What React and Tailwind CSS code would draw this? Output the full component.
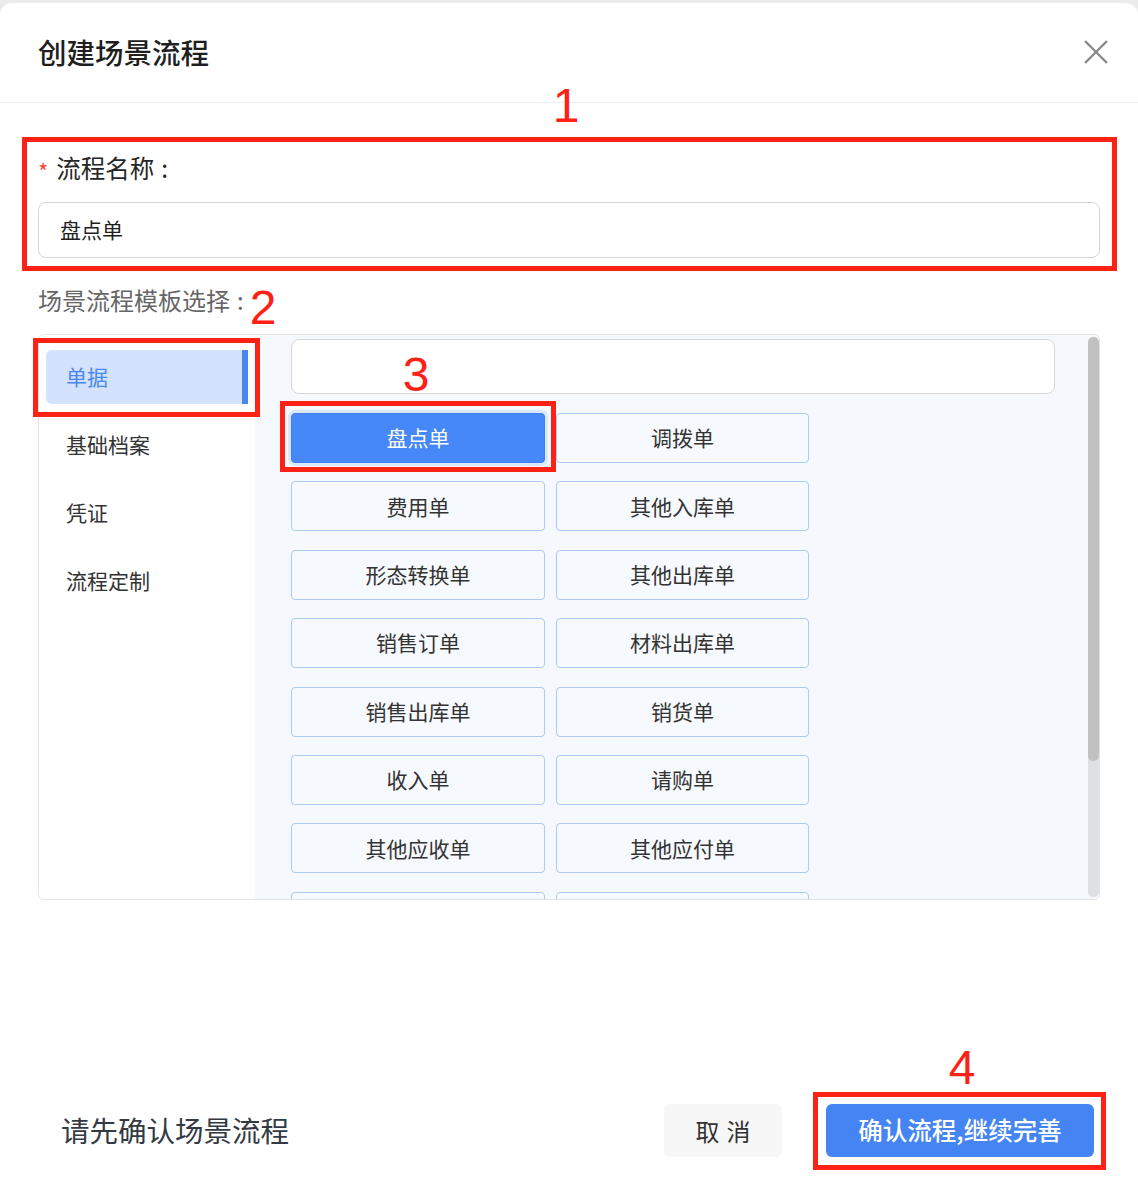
import React from "react";

const font = { fontFamily: '"Noto Sans CJK SC", "Noto Sans", sans-serif' };

const items = [
  ["盘点单", "调拨单"],
  ["费用单", "其他入库单"],
  ["形态转换单", "其他出库单"],
  ["销售订单", "材料出库单"],
  ["销售出库单", "销货单"],
  ["收入单", "请购单"],
  ["其他应收单", "其他应付单"],
  ["", ""],
];

function RedBox({ className }) {
  return <div className={"pointer-events-none absolute border-[5px] border-[#fe2115] " + className} />;
}

function Num({ children, className }) {
  return (
    <div
      className={"pointer-events-none absolute w-[40px] text-center text-[48px] leading-none text-[#fe2115] " + className}
      style={{ fontFamily: '"Liberation Sans", Arial, sans-serif' }}
    >
      {children}
    </div>
  );
}

export default function App() {
  return (
    <div className="relative h-[1180px] w-[1138px] overflow-hidden bg-[#ececec] pt-[3px]" style={font}>
      <div className="flex h-full flex-col rounded-t-[12px] bg-white">
        {/* header */}
        <div className="flex h-[100px] shrink-0 items-center justify-between border-b border-[#eeeeee] pl-[38px] pr-[29px]">
          <div className="text-[28.5px] font-medium text-[#1f1f1f]">创建场景流程</div>
          <svg width="26" height="26" viewBox="0 0 26 26" className="mt-[-2px]">
            <path d="M2 2 L24 24 M24 2 L2 24" stroke="#8a8a8a" strokeWidth="2.4" fill="none" />
          </svg>
        </div>

        {/* body */}
        <div className="px-[38px] pt-[50px]">
          <div className="flex h-[30px] items-center text-[24.5px] leading-[30px] text-[#262626]">
            <span className="mr-[8px] mt-[4px] text-[22px] text-[#f5473f]">*</span>
            <span>流程名称</span>
            <span className="ml-[7px]">:</span>
          </div>
          <div className="mt-[19px] flex h-[56px] items-center rounded-[8px] border border-[#d4d4d4] px-[21px] text-[21px] text-[#1f1f1f]">
            盘点单
          </div>
          <div className="mt-[27px] flex h-[30px] items-center text-[24px] leading-[30px] text-[#666666]">
            <span>场景流程模板选择</span>
            <span className="ml-[7px]">:</span>
          </div>

          <div className="mt-[19px] flex h-[566px] overflow-hidden rounded-[6px] border border-[#e3e3e3]">
            {/* sidebar */}
            <div className="flex w-[216px] shrink-0 flex-col gap-[14px] bg-white px-[7px] pt-[15px]">
              <div className="relative flex h-[54px] items-center rounded-[6px] bg-[#d3e3fd] pl-[20px] text-[21px] text-[#4a86f0]">
                单据
                <div className="absolute right-0 top-0 h-full w-[6px] bg-[#4a86f0]" />
              </div>
              {["基础档案", "凭证", "流程定制"].map((t) => (
                <div key={t} className="flex h-[54px] items-center pl-[20px] text-[21px] text-[#333333]">
                  {t}
                </div>
              ))}
            </div>

            {/* right pane */}
            <div className="flex flex-1 bg-[#f5f9fd]">
              <div className="flex-1 overflow-hidden pl-[36px] pt-[4px]">
                <div className="h-[55px] w-[764px] rounded-[8px] border border-[#d6d6d6] bg-white" />
                <div className="mt-[19px] grid w-[518px] grid-cols-[254px_253px] gap-x-[11px] gap-y-[18.4px]">
                  {items.flat().map((t, i) =>
                    i === 0 ? (
                      <div
                        key={i}
                        className="flex h-[50px] items-center justify-center rounded-[4px] border border-[#3f7ff0] bg-[#4788f8] text-[21px] text-white shadow-[0_0_0_3px_#dbe8fb]"
                      >
                        {t}
                      </div>
                    ) : (
                      <div
                        key={i}
                        className="flex h-[50px] items-center justify-center rounded-[4px] border border-[#adc9f5] bg-[#f6f9fd] text-[21px] text-[#333333]"
                      >
                        {t}
                      </div>
                    )
                  )}
                </div>
              </div>
              <div className="flex w-[11px] shrink-0 flex-col py-[2px]">
                <div className="flex flex-1 flex-col overflow-hidden rounded-[5px] bg-[#dee0e2]">
                  <div className="h-[424px] rounded-[5px] bg-[#c1c1c1]" />
                </div>
              </div>
            </div>
          </div>
        </div>

        <div className="flex-1" />

        {/* footer */}
        <div className="mb-[23px] flex h-[53px] shrink-0 items-center pl-[61px] pr-[44px]">
          <div className="flex-1 text-[28.5px] text-[#333a44]">请先确认场景流程</div>
          <div className="flex h-[53px] w-[118px] items-center justify-center rounded-[6px] bg-[#f7f7f7] text-[24px] text-[#333333]">
            <span>取</span>
            <span className="ml-[7px]">消</span>
          </div>
          <div className="ml-[44px] flex h-[53px] w-[268px] items-center justify-center rounded-[6px] bg-[#4584f3] text-[24.5px] font-medium text-white">
            确认流程,继续完善
          </div>
        </div>
      </div>

      {/* annotations */}
      <RedBox className="left-[22px] top-[137px] h-[134px] w-[1095px]" />
      <RedBox className="left-[33px] top-[338px] h-[79px] w-[227px]" />
      <RedBox className="left-[280px] top-[401px] h-[71px] w-[276px]" />
      <RedBox className="left-[813px] top-[1092px] h-[78px] w-[293px]" />
      <Num className="left-[546px] top-[82px]">1</Num>
      <Num className="left-[243px] top-[284px]">2</Num>
      <Num className="left-[396px] top-[351px]">3</Num>
      <Num className="left-[942px] top-[1044px]">4</Num>
    </div>
  );
}
